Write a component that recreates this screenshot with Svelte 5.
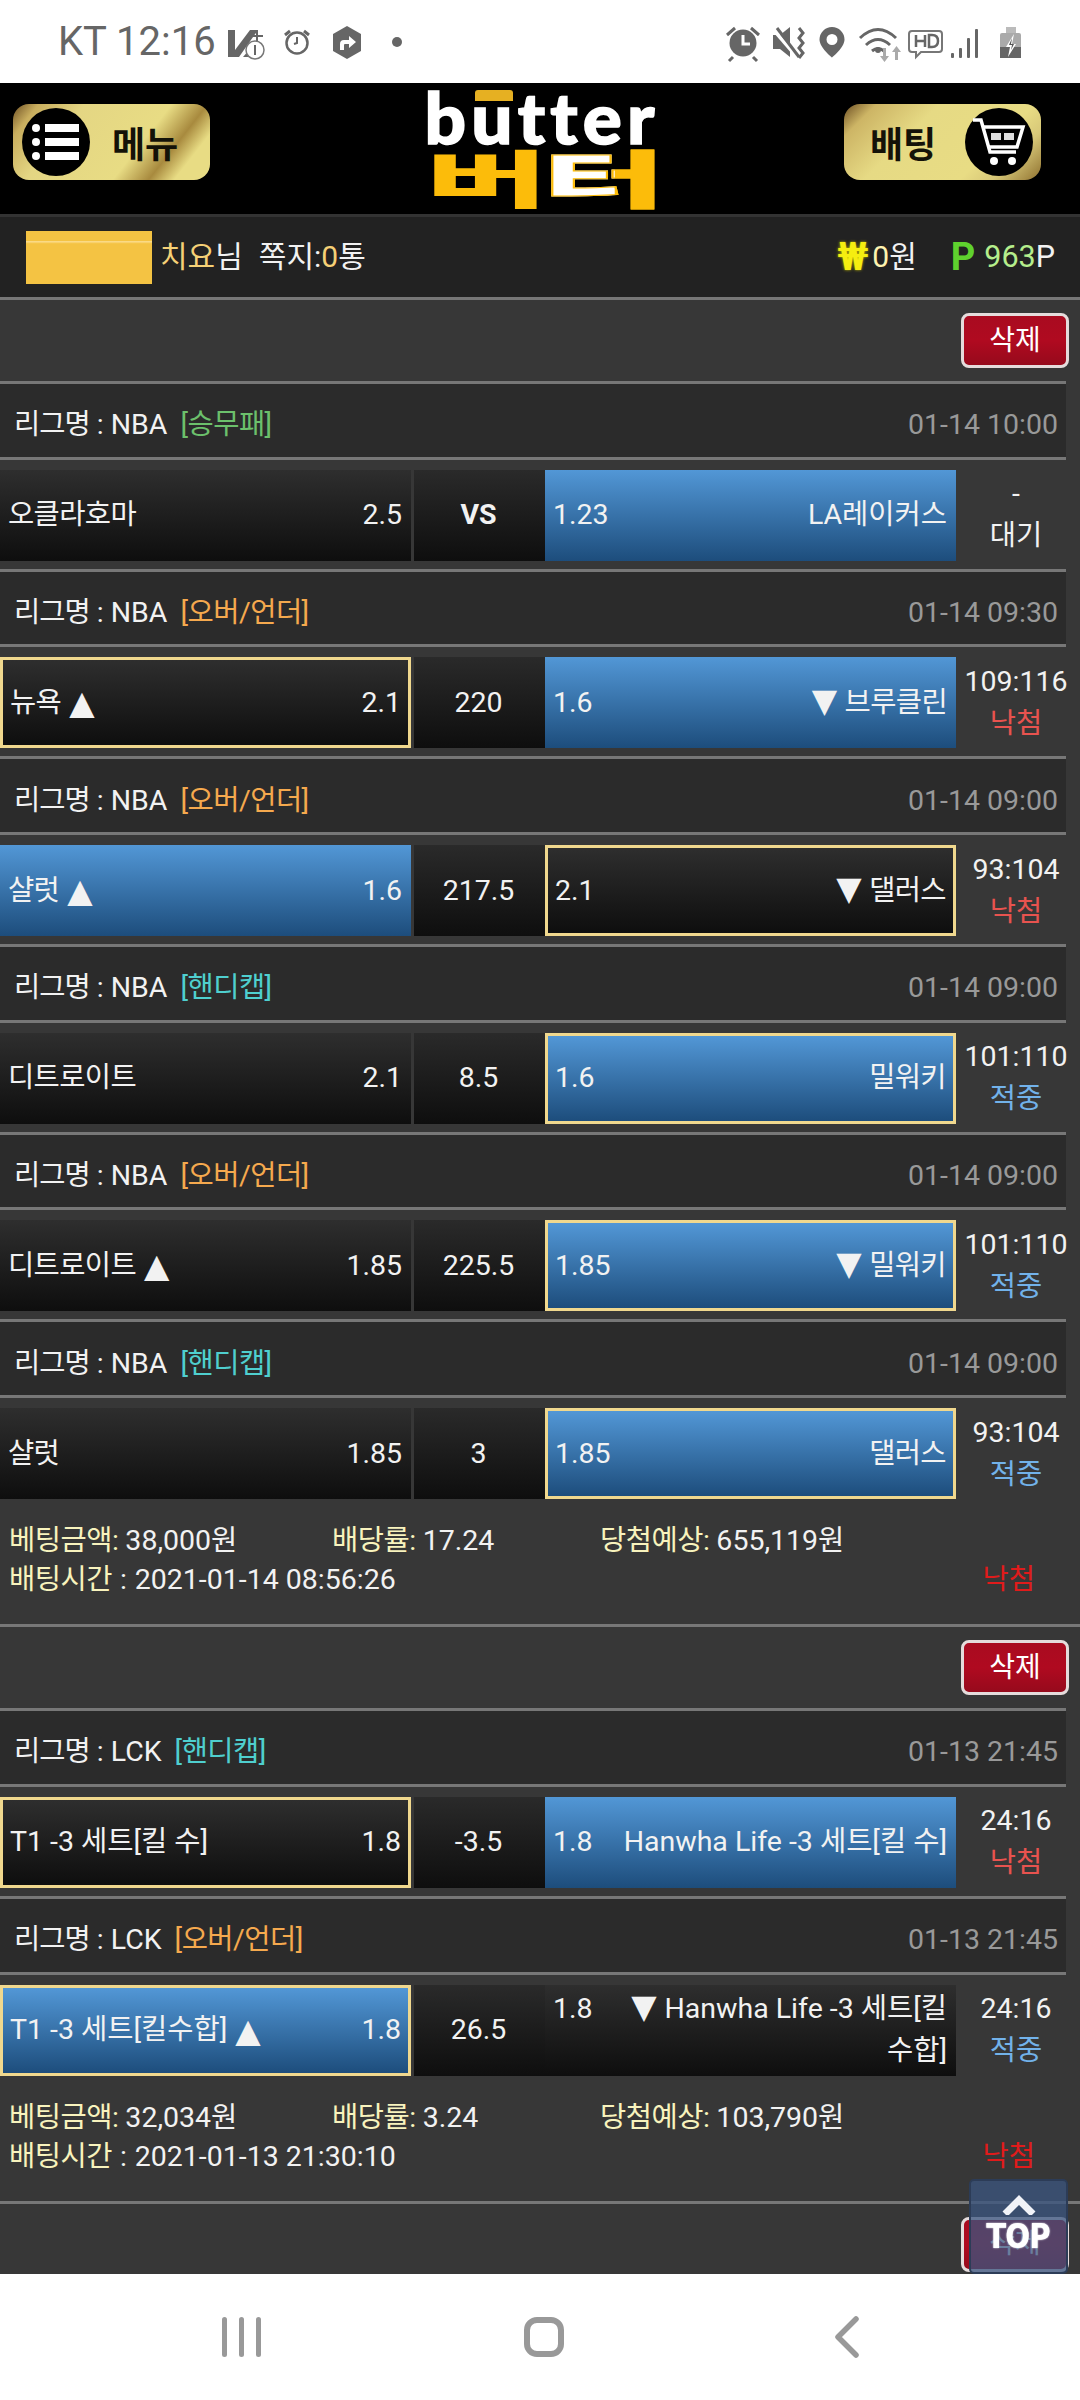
<script>
  const sections = [
    {
      rows: [
        { lg: 'NBA', tag: '승무패', c: 'g', date: '01-14 10:00', l: { n: '오클라호마', o: '2.5', k: 1 }, mid: 'VS', r: { n: 'LA레이커스', o: '1.23', blue: 1 }, s1: '-', s2: '대기', st: 'w' },
        { lg: 'NBA', tag: '오버/언더', c: 'o', date: '01-14 09:30', l: { n: '뉴욕', o: '2.1', sel: 1, ar: '▲', k: 1 }, mid: '220', r: { n: '브루클린', o: '1.6', blue: 1, ar: '▼', k: 1 }, s1: '109:116', s2: '낙첨', st: 'r' },
        { lg: 'NBA', tag: '오버/언더', c: 'o', date: '01-14 09:00', l: { n: '샬럿', o: '1.6', blue: 1, ar: '▲', k: 1 }, mid: '217.5', r: { n: '댈러스', o: '2.1', sel: 1, ar: '▼', k: 1 }, s1: '93:104', s2: '낙첨', st: 'r' },
        { lg: 'NBA', tag: '핸디캡', c: 't', date: '01-14 09:00', l: { n: '디트로이트', o: '2.1', k: 1 }, mid: '8.5', r: { n: '밀워키', o: '1.6', blue: 1, sel: 1, k: 1 }, s1: '101:110', s2: '적중', st: 'b' },
        { lg: 'NBA', tag: '오버/언더', c: 'o', date: '01-14 09:00', l: { n: '디트로이트', o: '1.85', ar: '▲', k: 1 }, mid: '225.5', r: { n: '밀워키', o: '1.85', blue: 1, sel: 1, ar: '▼', k: 1 }, s1: '101:110', s2: '적중', st: 'b' },
        { lg: 'NBA', tag: '핸디캡', c: 't', date: '01-14 09:00', l: { n: '샬럿', o: '1.85', k: 1 }, mid: '3', r: { n: '댈러스', o: '1.85', blue: 1, sel: 1, k: 1 }, s1: '93:104', s2: '적중', st: 'b' }
      ],
      amount: '38,000원', rate: '17.24', win: '655,119원', time: '2021-01-14 08:56:26'
    },
    {
      rows: [
        { lg: 'LCK', tag: '핸디캡', c: 't', date: '01-13 21:45', l: { n: 'T1 -3 세트[킬 수]', o: '1.8', sel: 1 }, mid: '-3.5', r: { n: 'Hanwha Life -3 세트[킬 수]', o: '1.8', blue: 1 }, s1: '24:16', s2: '낙첨', st: 'r' },
        { lg: 'LCK', tag: '오버/언더', c: 'o', date: '01-13 21:45', l: { n: 'T1 -3 세트[킬수합]', o: '1.8', blue: 1, sel: 1, ar: '▲' }, mid: '26.5', r: { n: 'Hanwha Life -3 세트[킬', n2: '수합]', o: '1.8', ar: '▼' }, s1: '24:16', s2: '적중', st: 'b' }
      ],
      amount: '32,034원', rate: '3.24', win: '103,790원', time: '2021-01-13 21:30:10'
    }
  ];
</script>

<div class="page">
  <div class="status">
    <span class="carrier">KT 12:16</span>
    <svg class="sleft" width="180" height="50" viewBox="225 15 180 50" fill="#666">
      <path d="M228 28h7v20l15-20h8l-19 27h-11z" />
      <path d="M243 55l7-8h8l-6 5v3z" />
      <path d="M256 28h2v5h5v2h-5v5h-2v-5h-5v-2h5z" />
      <circle cx="255" cy="48" r="9" fill="#fff" stroke="#777" stroke-width="1.500" />
      <path d="M254 43h2v10h-2z" />
      <circle cx="297" cy="41" r="10.500" fill="none" stroke="#666" stroke-width="2.500" />
      <path d="M285 33l5-4M309 33l-5-4" stroke="#666" stroke-width="3" />
      <path d="M297 35v6l-3 1" stroke="#666" stroke-width="2" fill="none" />
      <path d="M347 24l14 8v17l-14 8-14-8v-17z" />
      <path d="M340 48v-6q0-4 4-4h5v-4l7 6-7 6v-4h-4q-1 0-1 1v5z" fill="#fff" />
      <circle cx="397" cy="40" r="5" />
    </svg>
    <svg class="sright" width="310" height="50" viewBox="720 15 310 50" fill="#666">
      <circle cx="743" cy="41" r="13.500" />
      <path d="M743 33v9h7" stroke="#fff" stroke-width="3" fill="none" />
      <path d="M727 33l8-7M759 33l-8-7M733 55l-4 4M753 55l4 4" stroke="#666" stroke-width="3" />
      <path d="M773 33h7l10-8v30l-10-8h-7z" />
      <path d="M772 26l25 29" stroke="#fff" stroke-width="3.500" />
      <path d="M777 26l22 29" stroke="#666" stroke-width="3" />
      <path d="M799 26l4 5-4 5 4 5-4 5 4 5-4 5" stroke="#666" stroke-width="3" fill="none" />
      <path fill-rule="evenodd" d="M832 25a12.500 12.500 0 0 1 12.500 12.500c0 8-12.500 18-12.500 18s-12.500-10-12.500-18a12.500 12.500 0 0 1 12.500-12.500zm0 7a5.500 5.500 0 1 0 0 11 5.500 5.500 0 0 0 0-11z" />
      <path d="M860 36q18-17 36 0M866 43q12-11 24 0M872 49q6-5 12 0" stroke="#666" stroke-width="3" fill="none" />
      <circle cx="878" cy="48" r="3" />
      <path d="M883 46h3v8h3l-4.500 6-4.500-6h3z" fill="#aaa" />
      <path d="M895 58h3v-8h3l-4.500-6-4.500 6h3z" fill="#aaa" />
      <path d="M912 29h27q3 0 3 3v15q0 3-3 3h-18l-5 5v-5h-4q-3 0-3-3v-15q0-3 3-3z" fill="none" stroke="#777" stroke-width="2" />
      <path d="M916 33v12M925 33v12M916 39h9M929 33v12h3q6 0 6-6t-6-6z" fill="none" stroke="#666" stroke-width="2.500" />
      <rect x="951" y="51" width="3" height="5" rx="1" />
      <rect x="959" y="46" width="3" height="10" rx="1" />
      <rect x="967" y="36" width="3" height="20" rx="1" />
      <rect x="975" y="27" width="3" height="29" rx="1" />
      <rect x="1006" y="25" width="10" height="6" fill="#bbb" />
      <rect x="1000" y="31" width="21" height="25" rx="2" fill="#aaa" />
      <rect x="1000" y="45" width="21" height="11" fill="#666" />
      <path d="M1014 32l-8 13h4l-2 10 8-13h-4l2-10z" fill="#fff" />
      <path d="M1012 36l-3 7h3l-1 5 3-6h-3z" fill="#555" />
    </svg>
  </div>

  <div class="main">
    <header class="head">
      <div class="gold menu">
        <span class="disc">
          <svg width="50" height="40" viewBox="0 0 50 40">
            <g fill="#fff">
              <circle cx="5" cy="6" r="4" />
              <circle cx="5" cy="20" r="4" />
              <circle cx="5" cy="34" r="4" />
              <rect x="14" y="2" width="34" height="8" />
              <rect x="14" y="16" width="34" height="8" />
              <rect x="14" y="30" width="34" height="8" />
            </g>
          </svg>
        </span>
        <span class="gtext">메뉴</span>
      </div>
      <div class="logo">
        <span class="bar"></span>
        <span class="en">butter</span>
        <span class="ko"><span class="k1">버</span><span class="k2">터</span></span>
      </div>
      <div class="gold bet">
        <span class="gtext">배팅</span>
        <span class="disc">
          <svg width="56" height="56" viewBox="0 0 56 56" fill="none" stroke="#fff">
            <path d="M2 6h8l9 32h26" stroke-width="3.500" />
            <path d="M11 13h41l-6 20H18" stroke-width="3.500" />
            <rect x="20" y="19" width="10" height="7" fill="#ddd" stroke="none" />
            <rect x="33" y="19" width="10" height="7" fill="#ddd" stroke="none" />
            <circle cx="23" cy="47" r="4" fill="#fff" stroke="none" />
            <circle cx="41" cy="47" r="4" fill="#fff" stroke="none" />
          </svg>
        </span>
      </div>
    </header>

    <div class="info">
      <div class="who">
        <span class="mask"></span>
        <span><span class="y">치요</span>님</span>
        <span class="note">쪽지:<span class="y">0</span>통</span>
      </div>
      <div class="money">
        <span class="won">₩</span>
        <span class="cash"><span class="cr">0</span>원</span>
        <span class="pt">P</span>
        <span class="pts"><span class="lg">963</span>P</span>
      </div>
    </div>

    {#each sections as s}
      <div class="del"><button class="delbtn">삭제</button></div>
      {#each s.rows as r}
        <div class="league">
          <span><span class="rl">리그명</span> : {r.lg}<span class="tag {r.c}">[{r.tag}]</span></span>
          <span class="date">{r.date}</span>
        </div>
        <div class="match">
          <div class="cell left" class:blue={r.l.blue} class:sel={r.l.sel}>
            <span class="nm" class:kn={r.l.k}>{r.l.n}{#if r.l.ar}<span class="ar">{r.l.ar}</span>{/if}</span>
            <span>{r.l.o}</span>
          </div>
          <div class="mid" class:bold={r.mid === 'VS'}>{r.mid}</div>
          <div class="cell right" class:blue={r.r.blue} class:sel={r.r.sel} class:two={r.r.n2}>
            <span class="odd">{r.r.o}</span>
            <span class="nm rt" class:kn={r.r.k}>{#if r.r.ar}<span class="ar dn">{r.r.ar}</span>{/if}{r.r.n}{#if r.r.n2}<br />{r.r.n2}{/if}</span>
          </div>
          <div class="res">
            <span>{r.s1}</span>
            <span class={r.st}>{r.s2}</span>
          </div>
        </div>
      {/each}
      <div class="foot">
        <div class="f1">
          <span><span class="lb">베팅금액:</span> {s.amount}</span>
          <span><span class="lb">배당률:</span> {s.rate}</span>
          <span><span class="lb">당첨예상:</span> {s.win}</span>
        </div>
        <div class="f2">
          <span><span class="lb">배팅시간</span><span class="colon">:</span>{s.time}</span>
          <span class="lose">낙첨</span>
        </div>
      </div>
    {/each}
    <div class="del"><button class="delbtn">삭제</button></div>

    <div class="top">
      <svg width="34" height="20" viewBox="0 0 34 20"><path d="M3 19 17 5l14 14" fill="none" stroke="#f1f3f8" stroke-width="7" /></svg>
      <span>TOP</span>
    </div>
  </div>

  <nav class="nav">
    <span class="bars"><i></i><i></i><i></i></span>
    <span class="home"></span>
    <svg width="26" height="44" viewBox="0 0 26 44"><path d="M22 4 4 22l18 18" fill="none" stroke="#999" stroke-width="5.500" stroke-linecap="round" stroke-linejoin="round" /></svg>
  </nav>
</div>

<style>
  :global(body) { margin: 0; }
  .page {
    width: 1080px; height: 2400px; display: flex; flex-direction: column; overflow: hidden;
    font: 28.5px/42px Roboto, "Noto Sans CJK KR", sans-serif; color: #f2f2f2; background: #fff;
  }
  .status { height: 83px; flex: none; display: flex; align-items: center; padding: 0 50px 0 58px; box-sizing: border-box; color: #666; }
  .carrier { font-size: 40px; line-height: 83px; width: 167px; flex: none; }
  .sright { margin-left: auto; }

  .main { flex: 1; min-height: 0; position: relative; overflow: hidden; background: #373737; }
  .head { height: 131px; background: #000; display: flex; justify-content: space-between; padding: 21px 39px 0 13px; box-sizing: border-box; align-items: flex-start; }
  .gold {
    width: 197px; height: 76px; border-radius: 16px; display: flex; align-items: center; color: #111;
    background: linear-gradient(128deg, #6d4f24 0, #c9ae5e 10%, #e4d683 28%, #e8dc84 62%, #a88a3e 76%, #e8dc84 86%, #e8dc84 100%);
  }
  .bet { background: linear-gradient(135deg, #6d4f24 0, #cdb565 12%, #e6da84 35%, #e8dc84 70%, #d8c878 82%, #8f7130 100%); }
  .disc { width: 68px; height: 68px; border-radius: 50%; background: #000; display: flex; align-items: center; justify-content: center; flex: none; }
  .menu .disc { margin-left: 9px; }
  .bet .disc { margin-left: 29px; }
  .gtext { font: 700 36px/1 "Noto Sans CJK KR", sans-serif; color: #141208; }
  .menu .gtext { margin-left: 22px; }
  .bet .gtext { margin-left: 26px; }

  .logo { position: relative; width: 232px; height: 118px; margin: -14px 0 0 30px; display: flex; flex-direction: column; align-items: center; font-family: Lato, sans-serif; }
  .en { font-weight: 900; font-size: 70px; line-height: 54px; height: 54px; color: #fff; letter-spacing: 5px; -webkit-text-stroke: 1.5px #fff; transform: scaleX(1.04); }
  .bar { position: absolute; z-index: 1; left: 49px; top: 0; width: 38px; height: 11px; background: #e6b022; border-radius: 3px 3px 0 0; }
  .ko { font: 900 62px/64px "Noto Sans CJK KR", sans-serif; color: #fcbc0a; transform: scaleX(2.16); letter-spacing: -3px; white-space: nowrap; }
  .k2 { background: linear-gradient(90deg, #fff 0, #fff 62%, #fcbc0a 62%); -webkit-background-clip: text; background-clip: text; color: transparent; -webkit-text-stroke: 1px #fcbc0a; }

  .info { height: 86px; background: #222; border-top: 3px solid #333; border-bottom: 3px solid #777; box-sizing: border-box; display: flex; align-items: center; justify-content: space-between; padding: 0 25px 0 26px; font-size: 30px; }
  .who { display: flex; align-items: center; gap: 8px; }
  .mask { width: 126px; height: 53px; background: linear-gradient(#f4c343 0, #f4c343 18%, #fbdc8c 20%, #f4c343 24%); }
  .note { margin-left: 8px; }
  .y { color: #f5d076; }
  .money { display: flex; align-items: center; }
  .won { font-weight: 700; color: #f5ee10; font-size: 38px; margin-right: 4px; text-shadow: 0 0 3px #c8c000; }
  .cr { color: #fdf3b0; }
  .pt { font-weight: 700; color: #5fd22e; font-size: 38px; margin-left: 34px; margin-right: 9px; }
  .pts { font-size: 30.500px; }
  .lg { color: #b5ee8c; }

  .del { height: 81px; box-sizing: border-box; padding: 13px 11px 0 0; display: flex; justify-content: flex-end; align-items: flex-start; }
  .delbtn {
    width: 108px; height: 55px; box-sizing: border-box; border: 3px solid #e5dcdc; border-radius: 8px; color: #fff; padding: 0;
    background: linear-gradient(#a90b20, #b00a20 50%, #960a1c); font: 28px/1 Roboto, "Noto Sans CJK KR", sans-serif;
  }
  .league {
    width: 1066px; height: 78.700px; box-sizing: border-box; background: #2b2b2b; border-top: 3px solid #777; border-bottom: 3px solid #777;
    display: flex; align-items: center; justify-content: space-between; padding: 10px 8px 0 14px;
  }
  .rl { letter-spacing: -1px; }
  .tag { margin-left: 13px; letter-spacing: -.5px; }
  .g { color: #6cc06c; }
  .o { color: #f5a94e; }
  .t { color: #4fcfcf; }
  .date { color: #999; }
  .match { width: 1066px; height: 109px; box-sizing: border-box; padding: 10px 0 8px; display: flex; }
  .cell {
    box-sizing: border-box; height: 91px; display: flex; justify-content: space-between; align-items: center; padding: 0 9px 0 8px;
    background: linear-gradient(#2e2e2e, #0e0e0e); flex: none; width: 411px;
  }
  .blue { background: linear-gradient(#5297d6, #1d4d7c); }
  .sel { border: 3px solid #f0d88e; padding: 0 7px; }
  .mid {
    width: 131px; margin-left: 3px; height: 91px; flex: none; display: flex; align-items: center; justify-content: center; padding-right: 2px; box-sizing: border-box;
    background: linear-gradient(#2a2a2a, #0e0e0e);
  }
  .bold { font-weight: 700; }
  .nm { white-space: nowrap; display: flex; align-items: center; }
  .kn { letter-spacing: -.6px; }
  .rt { display: block; text-align: right; }
  .two { align-items: flex-start; padding-top: 3px; }
  .ar { font: 33px/1 "DejaVu Sans", sans-serif; margin-left: 8px; }
  .dn { margin: 0 8px 0 0; }
  .res { width: 120px; flex: none; height: 91px; display: flex; flex-direction: column; align-items: center; justify-content: center; }
  .w { color: #f2f2f2; }
  .r { color: #e8534f; }
  .b { color: #72b2ea; }

  .foot { height: 120px; box-sizing: border-box; border-bottom: 3px solid #777; padding: 14px 45px 0 9px; line-height: 39px; }
  .f1 { display: grid; grid-template-columns: 323px 268px 1fr; }
  .f2 { display: flex; justify-content: space-between; }
  .colon { margin: 0 8px; }
  .lb { color: #f8f3bd; letter-spacing: -.5px; }
  .lose { color: #e01b1b; }

  .top {
    position: absolute; left: 969px; top: 2096px; width: 99px; height: 95px; box-sizing: border-box; border-radius: 5px;
    background: rgba(59, 86, 127, .76); border: 2px solid #2c3c57; display: flex; flex-direction: column; align-items: center; color: #fff;
    padding-top: 14px; font: 800 34px/34px "DejaVu Sans", sans-serif;
  }
  .top span { margin-top: 4px; letter-spacing: -1px; transform: scaleX(.86); text-shadow: 0 0 2px #fff; }

  .nav { height: 126px; flex: none; background: #fff; display: flex; align-items: center; padding-left: 222px; box-sizing: border-box; }
  .bars { display: flex; gap: 12px; }
  .bars i { width: 5px; height: 40px; border-radius: 3px; background: #999; }
  .home { width: 40px; height: 40px; box-sizing: border-box; border: 6px solid #999; border-radius: 13px; margin-left: 263px; margin-right: 270px; }
</style>
